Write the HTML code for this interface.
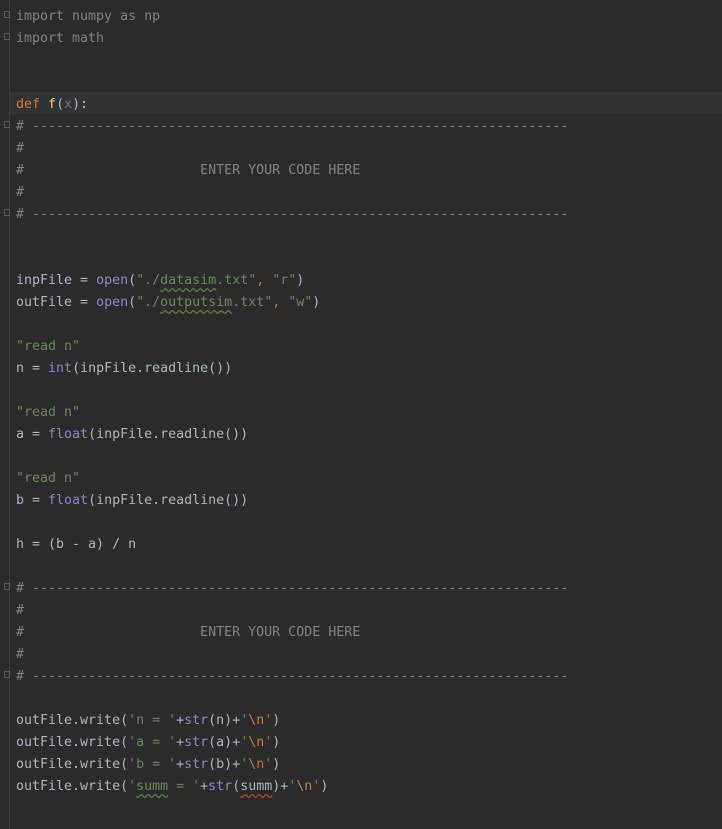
<!DOCTYPE html>
<html><head><style>
html,body{margin:0;padding:0;background:#2b2b2b;width:722px;height:829px;overflow:hidden}
.g{position:absolute;left:9px;top:0;width:1px;height:829px;background:#3a3a3a}
.cl{position:absolute;left:10px;top:92px;width:712px;height:22px;background:#323232}
pre{position:absolute;left:16px;top:6px;margin:0;font-family:"DejaVu Sans Mono","Liberation Mono",monospace;font-size:13.3px;line-height:22px;color:#a9b7c6}
.c{color:#808080}.k{color:#cc7832}.f{color:#ffc66d}.s{color:#6a8759}.b{color:#8888c6}.p{color:#72737a}
.w{text-decoration:underline wavy #5c7a4a;text-underline-offset:3px}
.r{text-decoration:underline wavy #bc3f3c;text-underline-offset:3px}
.fold{position:absolute;left:4px;width:6px;height:7px;border:1px solid #5a5a5a;box-sizing:border-box;background:#2b2b2b}
</style></head><body>
<div class="g"></div><div class="cl"></div>
<div class="fold" style="top:11px"></div><div class="fold" style="top:33px"></div>
<div class="fold" style="top:121px"></div><div class="fold" style="top:209px"></div>
<div class="fold" style="top:583px"></div><div class="fold" style="top:671px"></div>
<pre><span class="c">import numpy as np
import math</span>


<span class="k">def</span> <span class="f">f</span>(<span class="p">x</span>):
<span class="c"># -------------------------------------------------------------------
#
#                      ENTER YOUR CODE HERE
#
# -------------------------------------------------------------------</span>


inpFile = <span class="b">open</span>(<span class="s">"./<span class="w">datasim</span>.txt"</span><span class="k">,</span> <span class="s">"r"</span>)
outFile = <span class="b">open</span>(<span class="s">"./<span class="w">outputsim</span>.txt"</span><span class="k">,</span> <span class="s">"w"</span>)

<span class="s">"read n"</span>
n = <span class="b">int</span>(inpFile.readline())

<span class="s">"read n"</span>
a = <span class="b">float</span>(inpFile.readline())

<span class="s">"read n"</span>
b = <span class="b">float</span>(inpFile.readline())

h = (b - a) / n

<span class="c"># -------------------------------------------------------------------
#
#                      ENTER YOUR CODE HERE
#
# -------------------------------------------------------------------</span>

outFile.write(<span class="s">'n = '</span>+<span class="b">str</span>(n)+<span class="s">'<span class="k">\n</span>'</span>)
outFile.write(<span class="s">'a = '</span>+<span class="b">str</span>(a)+<span class="s">'<span class="k">\n</span>'</span>)
outFile.write(<span class="s">'b = '</span>+<span class="b">str</span>(b)+<span class="s">'<span class="k">\n</span>'</span>)
outFile.write(<span class="s">'<span class="w">summ</span> = '</span>+<span class="b">str</span>(<span class="r">summ</span>)+<span class="s">'<span class="k">\n</span>'</span>)
</pre>
</body></html>
